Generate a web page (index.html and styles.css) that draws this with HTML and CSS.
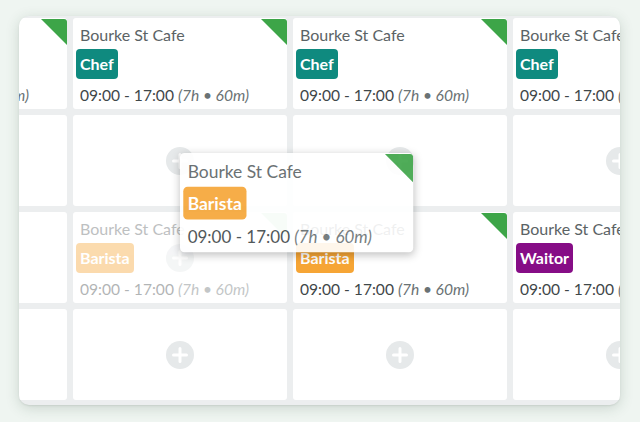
FILE: index.html
```html
<!DOCTYPE html>
<html lang="en">
<head>
    <meta charset="UTF-8">
    <meta name="viewport" content="width=device-width, initial-scale=1.0">
    <title>Roster board</title>
    <link rel="stylesheet" href="styles.css">
</head>
<body>
    <!-- Roster panel, scrolled sideways so only part of the week is visible -->
    <div class="panel">
        <div class="board">
            <!-- row 1 -->
            <div class="cell shift">
                <span class="flag"></span>
                <div class="venue">Bourke St Cafe</div>
                <span class="role chef">Chef</span>
                <div class="time">09:00 - 17:00 <em>(7h • 60m)</em></div>
            </div>
            <div class="cell shift">
                <span class="flag"></span>
                <div class="venue">Bourke St Cafe</div>
                <span class="role chef">Chef</span>
                <div class="time">09:00 - 17:00 <em>(7h • 60m)</em></div>
            </div>
            <div class="cell shift">
                <span class="flag"></span>
                <div class="venue">Bourke St Cafe</div>
                <span class="role chef">Chef</span>
                <div class="time">09:00 - 17:00 <em>(7h • 60m)</em></div>
            </div>
            <div class="cell shift">
                <span class="flag"></span>
                <div class="venue">Bourke St Cafe</div>
                <span class="role chef">Chef</span>
                <div class="time">09:00 - 17:00 <em>(7h • 60m)</em></div>
            </div>

            <!-- row 2 -->
            <div class="cell empty"><svg class="add" viewBox="0 0 28 28"><circle cx="14" cy="14" r="14"/><path d="M14 7.5v13M7.5 14h13"/></svg></div>
            <div class="cell empty"><svg class="add" viewBox="0 0 28 28"><circle cx="14" cy="14" r="14"/><path d="M14 7.5v13M7.5 14h13"/></svg></div>
            <div class="cell empty"><svg class="add" viewBox="0 0 28 28"><circle cx="14" cy="14" r="14"/><path d="M14 7.5v13M7.5 14h13"/></svg></div>
            <div class="cell empty"><svg class="add" viewBox="0 0 28 28"><circle cx="14" cy="14" r="14"/><path d="M14 7.5v13M7.5 14h13"/></svg></div>

            <!-- row 3 -->
            <div class="cell empty"></div>
            <div class="cell shift dragging">
                <span class="flag"></span>
                <div class="venue">Bourke St Cafe</div>
                <span class="role barista">Barista</span>
                <div class="time">09:00 - 17:00 <em>(7h • 60m)</em></div>
                <svg class="add hover" viewBox="0 0 28 28"><circle cx="14" cy="14" r="14"/><path d="M14 7.5v13M7.5 14h13"/></svg>
            </div>
            <div class="cell shift">
                <span class="flag"></span>
                <div class="venue">Bourke St Cafe</div>
                <span class="role barista">Barista</span>
                <div class="time">09:00 - 17:00 <em>(7h • 60m)</em></div>
            </div>
            <div class="cell shift">
                <span class="flag"></span>
                <div class="venue">Bourke St Cafe</div>
                <span class="role waiter">Waitor</span>
                <div class="time">09:00 - 17:00 <em>(7h • 60m)</em></div>
            </div>

            <!-- row 4 -->
            <div class="cell empty"><svg class="add" viewBox="0 0 28 28"><circle cx="14" cy="14" r="14"/><path d="M14 7.5v13M7.5 14h13"/></svg></div>
            <div class="cell empty"><svg class="add" viewBox="0 0 28 28"><circle cx="14" cy="14" r="14"/><path d="M14 7.5v13M7.5 14h13"/></svg></div>
            <div class="cell empty"><svg class="add" viewBox="0 0 28 28"><circle cx="14" cy="14" r="14"/><path d="M14 7.5v13M7.5 14h13"/></svg></div>
            <div class="cell empty"><svg class="add" viewBox="0 0 28 28"><circle cx="14" cy="14" r="14"/><path d="M14 7.5v13M7.5 14h13"/></svg></div>
        </div>

        <!-- the shift that is being dragged -->
        <div class="cell shift ghost">
            <span class="flag"></span>
            <div class="venue">Bourke St Cafe</div>
            <span class="role barista">Barista</span>
            <div class="time">09:00 - 17:00 <em>(7h • 60m)</em></div>
        </div>
    </div>
</body>
</html>
```

FILE: styles.css
```css
/* page */
html, body {
    margin: 0;
    height: 100%;
    overflow: hidden;
}
body {
    padding: 16px 0 0 19px;
    box-sizing: border-box;
    background: #eff5f1;
    font-family: Lato, "Open Sans", sans-serif;
}

/* panel around the roster */
.panel {
    position: relative;
    width: 601px;
    height: 389px;
    box-sizing: border-box;
    padding: 2px 3px 0 1px;
    background: #eceeef;
    border-radius: 10px;
    overflow: hidden;
    box-shadow: 0 3px 14px rgba(40, 70, 50, 0.18), 0 1px 2px rgba(0, 0, 0, 0.08);
}
.board {
    display: grid;
    grid-template-columns: repeat(4, 214px);
    grid-auto-rows: 91px;
    gap: 6px;
    margin-left: -167px;
}

/* cells */
.cell {
    position: relative;
    background: #ffffff;
    border-radius: 3px;
    overflow: hidden;
}
.shift {
    padding: 6px 7px;
    box-sizing: border-box;
    white-space: nowrap;
}
.empty {
    display: flex;
    align-items: center;
    justify-content: center;
}
.flag {
    position: absolute;
    top: 1px;
    right: 0;
    width: 26px;
    height: 26px;
    background: #3da548;
    clip-path: polygon(0 0, 100% 0, 100% 100%);
    border-top-right-radius: 3px;
}
.venue {
    font-size: 16px;
    line-height: 22px;
    color: #5b6365;
}
.role {
    display: inline-block;
    margin: 3px 0 0 -4px;
    padding: 0 4px;
    height: 30px;
    line-height: 30px;
    border-radius: 4px;
    color: #ffffff;
    font-weight: 700;
    font-size: 16px;
}
.chef { background: #0f8a7f; }
.barista { background: #f6a535; }
.waiter { background: #860d86; }
.time {
    margin-top: 5px;
    font-size: 15.6px;
    line-height: 22px;
    color: #3f4749;
}
.time em {
    color: #6a7274;
}

/* add button */
.add {
    width: 28px;
    height: 28px;
}
.add circle { fill: #e6e9ea; }
.add path {
    stroke: #ffffff;
    stroke-width: 3;
    stroke-linecap: round;
}
.add.hover {
    position: absolute;
    left: 93px;
    top: 32px;
}

/* drag state: the source cell keeps its white card, only the content fades */
.dragging > * {
    opacity: 0.4;
}
.ghost {
    position: absolute;
    left: 161px;
    top: 137px;
    width: 214px;
    height: 91px;
    transform: scale(1.09);
    transform-origin: 0 0;
    opacity: 0.9;
    border-radius: 4px;
    box-shadow: 0 2px 8px rgba(0, 0, 0, 0.28);
}
```
